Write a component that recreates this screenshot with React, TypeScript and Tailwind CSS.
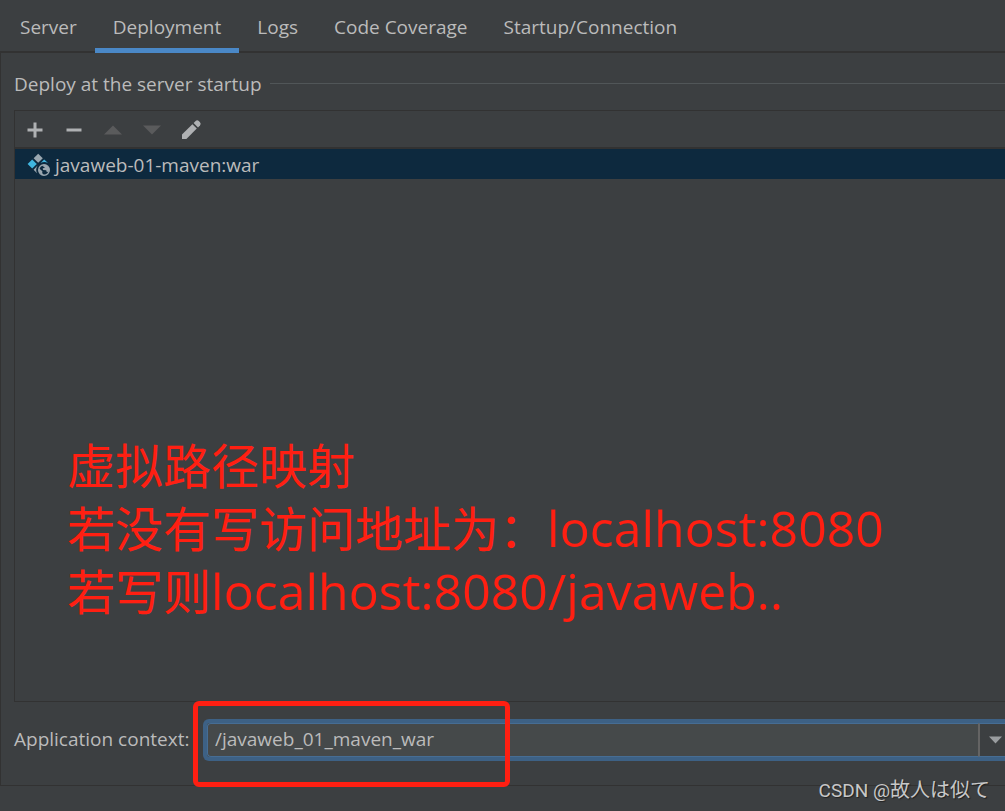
import { useState } from "react";

const tabs = ["Server", "Deployment", "Logs", "Code Coverage", "Startup/Connection"];

function ArtifactIcon() {
  return (
    <svg width="24" height="24" viewBox="0 0 24 24" aria-hidden="true" className="shrink-0">
      <path d="M11.2.8 15.8 5.3 11.2 9.8 6.6 5.3z" fill="#9aa7b0" />
      <path d="M5.2 6.6 9.8 11.1 5.2 15.6.6 11.1z" fill="#40b6e0" />
      <path d="M17.2 6.4 21 10A8 8 0 0 0 13.6 10z" fill="#40b6e0" />
      <path d="M10.6 12.4A8 8 0 0 0 10 20.2L6.6 16.8z" fill="#9aa7b0" />
      <circle cx="17" cy="17" r="5.3" fill="none" stroke="#9aa7b0" strokeWidth="1.4" />
      <path d="M12 15.2 15.4 18.2 15.2 20 17 22.4A5.5 5.5 0 0 1 12 15.2z" fill="#9aa7b0" />
      <path d="M14.6 12.4 18.6 11.8 22.4 15 21.8 18.8 19.8 19 19.2 17.2 16.2 17 15.6 15.4 18 14.4z" fill="#9aa7b0" />
    </svg>
  );
}

function PencilIcon() {
  return (
    <svg width="22" height="22" viewBox="0 0 22 22" fill="#afb1b3" aria-hidden="true">
      <path d="M2 15.6 12.4 5.2 16.8 9.6 6.4 20H2z" />
      <path d="M13.6 4 15.6 2Q17.2.6 18.8 2L20 3.2Q21.4 4.8 20 6.4L18 8.4z" />
    </svg>
  );
}

const tool = "flex size-[22px] items-center justify-center";

export default function App() {
  const [active, setActive] = useState("Deployment");
  const [context, setContext] = useState("/javaweb_01_maven_war");

  return (
    <div className="relative flex min-h-screen flex-col overflow-hidden bg-[#3c3f41] pb-[25px] font-['Open_Sans','Noto_Sans_CJK_SC',sans-serif] text-[19px] leading-6 text-[#bbbbbb]">
      <div role="tablist" className="flex h-[53px] shrink-0 border-b-2 border-[#323232] pl-0.5">
        {tabs.map((tab) => (
          <button
            key={tab}
            type="button"
            role="tab"
            aria-selected={tab === active}
            onClick={() => setActive(tab)}
            className={
              tab === active
                ? "-mb-0.5 border-b-5 border-[#4a88c7] px-[18px] pt-1.5"
                : "mb-[3px] px-[18px] pt-1.5"
            }
          >
            {tab}
          </button>
        ))}
      </div>

      <main className="flex flex-1 flex-col border-b border-l border-[#323232] pl-[13px]">
        <h2 className="flex h-[57px] items-center gap-2 pt-1">
          Deploy at the server startup
          <span className="h-px flex-1 bg-[#515658]" />
        </h2>

        <section className="relative flex flex-1 flex-col border-y border-l border-[#323232]">
          <div className="flex h-[38px] items-center gap-[17px] border-b-2 border-[#323232] pt-0.5 pl-[9px]">
            <button type="button" aria-label="Add" className={tool}>
              <svg width="16" height="16" viewBox="0 0 16 16" fill="#afb1b3">
                <path d="M6.5.5h3v6h6v3h-6v6h-3v-6h-6v-3h6z" />
              </svg>
            </button>
            <button type="button" aria-label="Remove" className={tool}>
              <svg width="16" height="16" viewBox="0 0 16 16" fill="#afb1b3">
                <path d="M.5 6.5h15v3H.5z" />
              </svg>
            </button>
            <button type="button" aria-label="Move up" disabled className={tool}>
              <svg width="18" height="10" viewBox="0 0 18 10" fill="#5a5b5c">
                <path d="M9 .5 18 9.5H0z" />
              </svg>
            </button>
            <button type="button" aria-label="Move down" disabled className={tool}>
              <svg width="18" height="10" viewBox="0 0 18 10" fill="#5a5b5c">
                <path d="M0 .5h18L9 9.5z" />
              </svg>
            </button>
            <button type="button" aria-label="Edit" className={tool}>
              <PencilIcon />
            </button>
          </div>
          <ul>
            <li className="flex h-[30px] items-center gap-1 bg-[#0d293e] pt-0.5 pl-3">
              <ArtifactIcon />
              <span>javaweb-01-maven:war</span>
            </li>
          </ul>
          <div
            lang="zh-CN"
            className="absolute bottom-[78px] left-[52px] text-5xl leading-[62px] whitespace-nowrap text-[#ff1f12]"
          >
            <p>虚拟路径映射</p>
            <p>
              若没有写访问地址为：<span className="text-[50px]">localhost:8080</span>
            </p>
            <p>
              若写则<span className="text-[50px]">localhost:8080/javaweb..</span>
            </p>
          </div>
        </section>

        <div className="flex h-[83px] items-center pb-[7px]">
          <label htmlFor="context" className="w-[189px] shrink-0 pb-0.5 whitespace-nowrap">
            Application context:
          </label>
          <div className="relative flex h-[42px] flex-1 rounded-l-md border-y-4 border-l-4 border-[#3d6185] bg-[#45494a]">
            <input
              id="context"
              value={context}
              onChange={(e) => setContext(e.target.value)}
              className="min-w-0 flex-1 rounded-l-sm border-y border-l border-[#466d94] pb-0.5 pl-[7px] outline-none"
            />
            <button
              type="button"
              aria-label="Show contexts"
              className="flex w-[27px] items-center justify-end border-y border-l-2 border-y-[#466d94] border-l-[#646464] bg-[#3c3f41] pr-[3px]"
            >
              <svg width="13" height="8" viewBox="0 0 13 8" fill="#9a9da0">
                <path d="M0 .5h13L6.5 7.5z" />
              </svg>
            </button>
            <div className="pointer-events-none absolute -top-[22px] -left-[14px] h-[86px] w-[317px] rounded-md border-5 border-[#ff1f12]" />
          </div>
        </div>
      </main>

      <p className="absolute right-[15px] bottom-2 font-[Roboto,'Noto_Sans_CJK_JP',sans-serif] text-[19px] leading-6 text-[#c8c8c8] [text-shadow:1px_1px_1px_#222]">
        CSDN @<span lang="ja" className="text-xl leading-6">故人は似て</span>
      </p>
    </div>
  );
}
